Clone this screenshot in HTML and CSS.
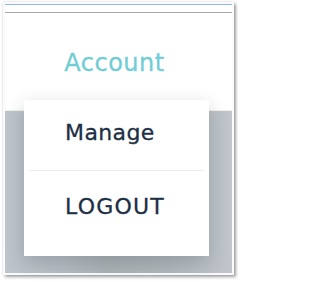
FILE: index.html
```html
<!DOCTYPE html>
<html>
<head>
<meta charset="utf-8">
<link rel="stylesheet" href="styles.css">
</head>
<body>
<div class="window">
  <div class="chrome"></div>
  <header class="header"><span class="title">Account</span></header>
  <div class="backdrop"></div>
  <nav class="menu">
    <a class="item item-first">Manage</a>
    <div class="divider"></div>
    <a class="item item-last">LOGOUT</a>
  </nav>
</div>
</body>
</html>
```
FILE: styles.css
```css
html, body {
  margin: 0;
  padding: 0;
  background: #ffffff;
  width: 238px;
  height: 282px;
  overflow: hidden;
}
.window {
  position: relative;
  margin: 2px 0 0 3px;
  width: 227px;
  height: 269px;
  border: 2px solid #fbfbfb;
  box-shadow: 0 0 2px rgba(0,0,0,0.18), 2px 2px 3px rgba(0,0,0,0.35);
  display: flex;
  flex-direction: column;
  font-family: "DejaVu Sans", "Noto Sans", sans-serif;
}
.chrome {
  height: 7px;
  border-top: 1px solid #8db9ee;
  border-bottom: 1px solid #a8a8a8;
  background: #fff;
}
.header {
  border-bottom: 1px solid #f1f0ea;
  background: #fff;
  display: flex;
  justify-content: center;
  padding-top: 38px;
  box-sizing: border-box;
  height: 98px;
}
.title {
  font-size: 24px;
  line-height: 24px;
  letter-spacing: 0.5px;
  color: #70cdd5;
  margin-right: 8px;
  height: 24px;
  -webkit-text-stroke: 0.3px #70cdd5;
}
.backdrop {
  height: 162px;
  background: linear-gradient(90deg, #bec5cc 0%, #b6bdc3 25%, #abb2b6 45%, #b0b7bb 70%, #c0c6cc 100%);
}
.menu {
  position: absolute;
  left: 19px;
  top: 96px;
  width: 185px;
  height: 156px;
  background: #fff;
  box-shadow: 0 6px 18px rgba(40,50,60,0.22);
  display: flex;
  flex-direction: column;
}
.item {
  display: block;
  font-size: 22px;
  line-height: 22px;
  color: #1d2f45;
  padding-left: 41px;
  letter-spacing: 0.4px;
  -webkit-text-stroke: 0.3px #1d2f45;
}
.item-first {
  padding-top: 22px;
  height: 48px;
}
.divider {
  height: 1px;
  background: #ebebeb;
  margin: 0 5px 0 6px;
}
.item-last {
  padding-top: 25px;
  letter-spacing: 1.2px;
}
```
